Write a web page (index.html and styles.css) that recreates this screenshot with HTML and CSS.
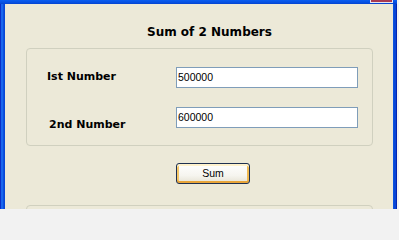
FILE: index.html
```html
<!DOCTYPE html>
<html lang="en">
<head>
<meta charset="utf-8">
<title>Sum of 2 Numbers</title>
<link rel="stylesheet" href="styles.css">
</head>
<body>
<div class="screen">
  <div class="window">
    <div class="titlebar"><span class="close"></span></div>
    <div class="frame">
      <div class="edge-left"></div>
      <main class="client">
        <h1 class="title">Sum of 2 Numbers</h1>
        <section class="group">
          <div class="row">
            <label class="label" for="n1">Ist Number</label>
            <input class="input" id="n1" type="text" value="500000">
          </div>
          <div class="row row-second">
            <label class="label" for="n2">2nd Number</label>
            <input class="input" id="n2" type="text" value="600000">
          </div>
        </section>
        <div class="actions">
          <button class="btn" type="button">Sum</button>
        </div>
        <section class="group group-result"></section>
      </main>
      <div class="edge-right"></div>
    </div>
  </div>
  <div class="desktop"></div>
</div>
</body>
</html>
```

FILE: styles.css
```css
html, body {
  margin: 0;
  padding: 0;
  width: 399px;
  height: 209px;
  overflow: hidden;
  background: #f2f2f2;
}

.screen {
  display: flex;
  width: 399px;
  height: 209px;
}

.window {
  flex: 0 0 397px;
  display: flex;
  flex-direction: column;
}

.titlebar {
  flex: 0 0 4px;
  display: flex;
  justify-content: flex-end;
  padding-right: 4px;
  background: linear-gradient(180deg, #0A5EF0 0%, #0650E2 60%, #0443CF 100%);
}

.close {
  width: 21px;
  height: 2px;
  background: #A83A52;
  border: 1px solid #E6E6F2;
  border-top: 0;
}

.frame {
  flex: 1;
  display: flex;
  min-height: 0;
}

.edge-left {
  flex: 0 0 5px;
  background: linear-gradient(90deg, #0A2FC8 0 1px, #1A66EE 1px 3px, #0A52DE 3px 4px, #0846D6 4px 5px);
}

.edge-right {
  flex: 0 0 4px;
  background: linear-gradient(90deg, #0A52DE 0 1px, #0846D6 1px 3px, #0426B0 3px 4px);
}

.desktop {
  flex: 1;
  background: #F4F4F2;
}

.client {
  flex: 1;
  display: flex;
  flex-direction: column;
  background: #ECE9D8;
  overflow: hidden;
}

.title {
  margin: 21px 0 0 142px;
  font: 700 12px/14px "DejaVu Sans", sans-serif;
  color: #000;
}

.group {
  flex: 0 0 auto;
  box-sizing: border-box;
  width: 347px;
  height: 98px;
  margin: 9px 0 0 21px;
  padding: 18px 0 0 20px;
  border: 1px solid #D0D0BF;
  border-radius: 4px;
}

.row {
  display: flex;
  align-items: flex-start;
}

.row-second {
  margin-top: 19px;
}

.label {
  flex: 0 0 129px;
  margin-top: 3px;
  font: 700 11px/13px "DejaVu Sans", sans-serif;
  color: #000;
}

.row-second .label {
  margin-top: 11px;
  padding-left: 2px;
  flex-basis: 127px;
}

.input {
  box-sizing: border-box;
  width: 182px;
  height: 21px;
  margin: 0;
  padding: 0 0 2px 1px;
  border: 1px solid #7F9DB9;
  border-radius: 0;
  background: #fff;
  font: 10.5px "Liberation Sans", Arial, sans-serif;
  color: #000;
  outline: none;
}

.actions {
  display: flex;
  margin-top: 17px;
  padding-left: 171px;
}

.btn {
  box-sizing: border-box;
  width: 74px;
  height: 21px;
  margin: 0;
  padding: 0 0 1px;
  border: 1px solid #1E3050;
  border-radius: 3px;
  background: linear-gradient(180deg, #FFFFFF 0%, #F6F5EF 60%, #E6E2D4 100%);
  box-shadow: inset 0 2px 0 #FFF2CC, inset 0 -2px 0 #E8A53A, inset 2px 0 0 #F6C869, inset -2px 0 0 #F0BA52;
  font: 10.5px "Liberation Sans", Arial, sans-serif;
  color: #000;
}

.group-result {
  height: 40px;
  margin-top: 21px;
  padding: 0;
}
```
